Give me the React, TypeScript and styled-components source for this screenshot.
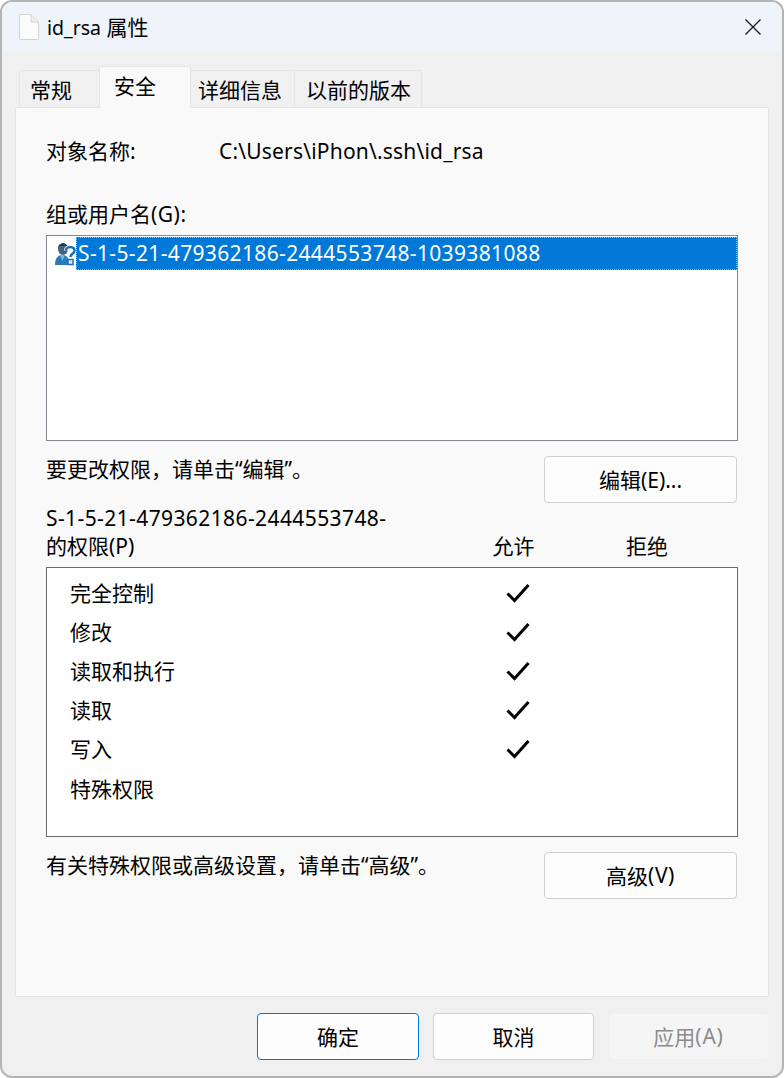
import React from 'react';
import styled, { createGlobalStyle } from 'styled-components';

const GlobalStyle = createGlobalStyle`
  html, body {
    margin: 0;
    padding: 0;
    background: #fff;
  }
  body {
    font-family: "Noto Sans", "Noto Sans CJK SC", sans-serif;
    font-size: 21px;
    color: #000;
  }
`;

const Dialog = styled.div`
  box-sizing: border-box;
  width: 784px;
  height: 1078px;
  display: flex;
  flex-direction: column;
  background: #f0f0f0;
  border: 2px solid #b4b4b4;
  border-radius: 12px;
  overflow: hidden;
`;

const TitleBar = styled.div`
  height: 50px;
  flex: none;
  display: flex;
  align-items: center;
  background: #eff4fa;
  padding: 0 21px 0 17px;
  gap: 8px;
`;
const TitleText = styled.div`
  flex: 1;
  font-size: 21px;
  line-height: 50px;
`;
const TitleLatin = styled.span`
  font-size: 19.5px;
`;

const TabStrip = styled.div`
  display: flex;
  align-items: flex-end;
  height: 56px;
  flex: none;
  padding-left: 17px;
  margin-bottom: -1px;
  position: relative;
  z-index: 1;
`;
const Tab = styled.div<{ $active?: boolean; $width: number; $inset: number; $first?: boolean }>`
  box-sizing: border-box;
  width: ${(p) => p.$width}px;
  height: ${(p) => (p.$active ? 42 : 38)}px;
  margin-left: ${(p) => (p.$first ? 0 : -1)}px;
  display: flex;
  align-items: center;
  padding-left: ${(p) => p.$inset}px;
  padding-bottom: ${(p) => (p.$active ? 6 : 0)}px;
  background: ${(p) => (p.$active ? '#f9f9f9' : '#f0f0f0')};
  border: 1px solid #e5e5e5;
  border-bottom: ${(p) => (p.$active ? 'none' : '1px solid #e5e5e5')};
  border-radius: 2px 2px 0 0;
  z-index: ${(p) => (p.$active ? 2 : 1)};
`;

const Panel = styled.div`
  box-sizing: border-box;
  height: 890px;
  flex: none;
  margin: 0 13px;
  width: 754px;
  background: #f9f9f9;
  border: 1px solid #e5e5e5;
  padding: 28px 30px 0 30px;
  display: flex;
  flex-direction: column;
`;

const Latin = styled.span<{ $spacing: number }>`
  letter-spacing: ${(p) => p.$spacing}px;
`;

const ObjectRow = styled.div`
  display: flex;
  height: 30px;
  line-height: 30px;
`;
const ObjectLabel = styled.div`
  width: 173px;
`;
const GroupLabel = styled.div`
  margin-top: 33px;
  height: 30px;
  line-height: 30px;
`;

const UserList = styled.div`
  box-sizing: border-box;
  margin-top: 6px;
  width: 692px;
  height: 206px;
  background: #fff;
  border: 1px solid #828790;
  padding: 0 0 0 8px;
`;
const UserRow = styled.div`
  display: flex;
  align-items: center;
  margin-top: 1px;
`;
const UserName = styled.div`
  background: #0078d7;
  color: #fff;
  flex: 1;
  height: 33px;
  line-height: 32px;
  padding-left: 2px;
  outline: 1px dotted #f0a040;
  outline-offset: -1px;
`;

const ActionRow = styled.div<{ $gap: number }>`
  display: flex;
  justify-content: space-between;
  align-items: flex-start;
  width: 691px;
  margin-top: ${(p) => p.$gap}px;
`;
const Hint = styled.div`
  line-height: 26px;
`;
const DialogButton = styled.div<{ $primary?: boolean; $disabled?: boolean; $width?: number }>`
  box-sizing: border-box;
  width: ${(p) => p.$width ?? 161}px;
  height: 47px;
  display: flex;
  align-items: center;
  justify-content: center;
  padding-bottom: 2px;
  border-radius: 4px;
  background: ${(p) => (p.$disabled ? '#f5f5f5' : '#fdfdfd')};
  border: 1px solid ${(p) => (p.$primary ? '#0078d4' : p.$disabled ? '#f0f0f0' : '#d0d0d0')};
  color: ${(p) => (p.$disabled ? '#8c8c8c' : '#000')};
`;

const PermHeader = styled.div`
  display: grid;
  grid-template-columns: 427px 81px 1fr;
  width: 694px;
  margin-top: 1px;
  line-height: 28px;
`;
const PermTitle = styled.div``;
const PermColumn = styled.div`
  align-self: end;
  text-align: center;
`;

const PermList = styled.div`
  box-sizing: border-box;
  margin-top: 7px;
  width: 692px;
  height: 270px;
  background: #fff;
  border: 1px solid #696969;
  padding: 5px 0 0 23px;
`;
const PermRow = styled.div`
  display: flex;
  align-items: center;
  height: 39.2px;
`;
const PermName = styled.div`
  width: 436px;
  padding-bottom: 2px;
`;

const Footer = styled.div`
  display: flex;
  justify-content: flex-end;
  gap: 14px;
  padding: 16px 13px 0 0;
`;

const FileIcon = () => (
  <svg width="20" height="26" viewBox="0 0 20 26">
    <path d="M.5 1.500a1 1 0 0 1 1-1H12L19.500 8v16.500a1 1 0 0 1-1 1h-17a1 1 0 0 1-1-1z" fill="#fbfbfb" stroke="#d2d2d2" />
    <path d="M12 .5V8h7.500" fill="#f0f0f0" stroke="#d2d2d2" />
  </svg>
);

const CloseIcon = () => (
  <svg width="16" height="16" viewBox="0 0 16 16">
    <path d="M.5.5l15 15M15.500.5l-15 15" stroke="#1a1a1a" strokeWidth="1.300" fill="none" />
  </svg>
);

const UnknownUserIcon = () => (
  <svg width="21" height="26" viewBox="0 0 21 26">
    <ellipse cx="8" cy="8" rx="5" ry="6" fill="#3f6585" />
    <path d="M3 7c0-6 10-6 10 0l-1-2H4z" fill="#27384c" />
    <path d="M0 24c0-7 3-10 7.500-10S14 17 14 24z" fill="#2a7cb6" />
    <path d="M5 14l2.500 6L10 14z" fill="#6fbde4" />
    <path d="M11 9.500c0-4.500 8.500-4.500 8.500 0 0 3.500-4 3-4 6.500" fill="none" stroke="#fff" strokeWidth="4" />
    <path d="M11 9.500c0-4.500 8.500-4.500 8.500 0 0 3.500-4 3-4 6.500" fill="none" stroke="#1668b8" strokeWidth="2.400" />
    <rect x="13" y="18.500" width="5" height="5" fill="#dcecf8" stroke="#1a70c0" strokeWidth="1.500" />
  </svg>
);

const CheckIcon = () => (
  <svg width="24" height="20" viewBox="0 0 24 20">
    <path d="M1.500 10.500l7 7L22.500 2" fill="none" stroke="#000" strokeWidth="3" />
  </svg>
);

const PERMISSIONS = [
  { name: '完全控制', allow: true },
  { name: '修改', allow: true },
  { name: '读取和执行', allow: true },
  { name: '读取', allow: true },
  { name: '写入', allow: true },
  { name: '特殊权限', allow: false },
];

const App = () => {
  return (
    <>
      <GlobalStyle />
      <Dialog>
        <TitleBar>
          <FileIcon />
          <TitleText><TitleLatin>id_rsa</TitleLatin> 属性</TitleText>
          <CloseIcon />
        </TitleBar>

        <TabStrip>
          <Tab $width={81} $inset={10} $first>常规</Tab>
          <Tab $width={92} $inset={14} $active>安全</Tab>
          <Tab $width={105} $inset={7}>详细信息</Tab>
          <Tab $width={128} $inset={11}>以前的版本</Tab>
        </TabStrip>

        <Panel>
          <ObjectRow>
            <ObjectLabel>对象名称:</ObjectLabel>
            <Latin $spacing={0.19}>C:\Users\iPhon\.ssh\id_rsa</Latin>
          </ObjectRow>
          <GroupLabel>组或用户名<Latin $spacing={0.5}>(G):</Latin></GroupLabel>
          <UserList>
            <UserRow>
              <UnknownUserIcon />
              <UserName><Latin $spacing={0.35}>S-1-5-21-479362186-2444553748-1039381088</Latin></UserName>
            </UserRow>
          </UserList>

          <ActionRow $gap={15}>
            <Hint>{'要更改权限\uFF0C请单击“编辑”。'}</Hint>
            <DialogButton $width={193}>编辑(E)...</DialogButton>
          </ActionRow>

          <PermHeader>
            <PermTitle><Latin $spacing={0.4}>S-1-5-21-479362186-2444553748-</Latin><br />的权限(P)</PermTitle>
            <PermColumn>允许</PermColumn>
            <PermColumn>拒绝</PermColumn>
          </PermHeader>
          <PermList>
            {PERMISSIONS.map((perm) => (
              <PermRow key={perm.name}>
                <PermName>{perm.name}</PermName>
                {perm.allow && <CheckIcon />}
              </PermRow>
            ))}
          </PermList>

          <ActionRow $gap={15}>
            <Hint>{'有关特殊权限或高级设置\uFF0C请单击“高级”。'}</Hint>
            <DialogButton $width={193}>高级<Latin $spacing={0.6}>(V)</Latin></DialogButton>
          </ActionRow>
        </Panel>

        <Footer>
          <DialogButton $primary $width={162}>确定</DialogButton>
          <DialogButton>取消</DialogButton>
          <DialogButton $disabled>应用<Latin $spacing={0.8}>(A)</Latin></DialogButton>
        </Footer>
      </Dialog>
    </>
  );
};

export default App;
